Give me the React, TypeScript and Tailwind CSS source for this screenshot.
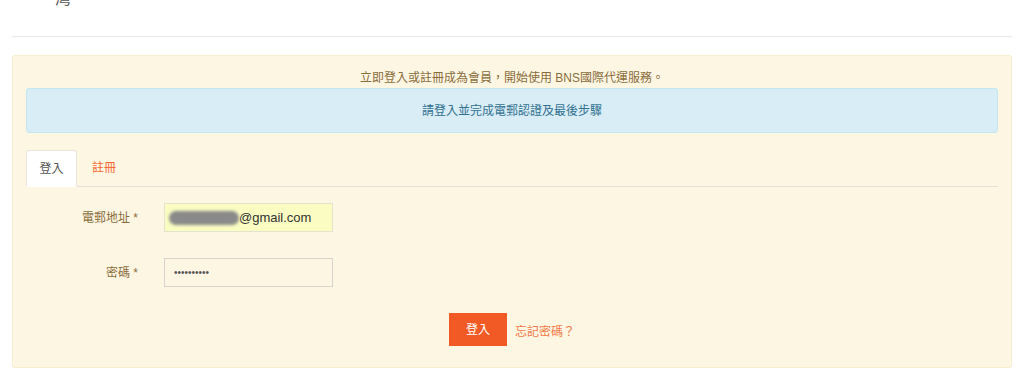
import React from 'react';

const font = "font-['Liberation_Sans','Noto_Sans_CJK_TC',sans-serif]";

const FormRow: React.FC<{ label: string; children: React.ReactNode }> = ({ label, children }) => (
    <div className="flex items-center">
        <label className="w-[114px] text-right text-[12px] text-[#8a6d3b] pr-[2px]">
            {label} <span>*</span>
        </label>
        <div className="ml-[24px]">{children}</div>
    </div>
);

const App: React.FC = () => {
    return (
        <div className={`${font} min-h-[379px] bg-white px-[12px] overflow-hidden`}>
            {/* header, cut off at the top of the window */}
            <div className="h-[37px] border-b border-[#e8e8e8] relative">
                <span className="absolute left-[43px] -top-[13px] text-[16px] text-[#555]">灣</span>
            </div>

            <div className="mt-[18px] bg-[#fdf6e3] border border-[#f8ecd0] rounded-[3px] px-[13px] pt-[13px] pb-[21px]">
                <p className="text-center text-[12px] leading-[19px] text-[#8a6d3b]">
                    立即登入或註冊成為會員，開始使用 BNS國際代運服務。
                </p>

                <div className="h-[45px] flex items-center justify-center bg-[#d9edf7] border border-[#c5e6f0] rounded-[3px] text-[12px] text-[#31708f]">
                    請登入並完成電郵認證及最後步驟
                </div>

                {/* tabs */}
                <div className="mt-[17px] flex border-b border-[#e3e1d8]">
                    <div className="-mb-px h-[37px] w-[51px] flex items-center justify-center bg-white border border-[#e8e6dc] border-b-white rounded-t-[3px] text-[12px] text-[#555]">
                        登入
                    </div>
                    <div className="h-[36px] flex items-center pl-[15px] text-[12px] text-[#f26a36]">註冊</div>
                </div>

                {/* form */}
                <div className="mt-[16px] flex flex-col gap-[26px]">
                    <FormRow label="電郵地址">
                        <div className="w-[169px] h-[29px] bg-[#fafcc2] border border-[#e3e3d0] flex items-center pl-[4px] text-[13px] text-[#333]">
                            <span className="inline-block w-[70px] h-[14px] bg-[#8a8a8a] rounded-full blur-[1.5px]" />
                            <span>@gmail.com</span>
                        </div>
                    </FormRow>
                    <FormRow label="密碼">
                        <div className="w-[169px] h-[29px] border border-[#d6d4cc] flex items-center pl-[9px] text-[10px] text-[#555]">
                            ••••••••••
                        </div>
                    </FormRow>
                </div>

                <div className="mt-[26px] flex items-center justify-center gap-[8px]">
                    <button className="w-[58px] h-[33px] bg-[#f15a24] text-white text-[12px]">登入</button>
                    <a className="text-[12px] text-[#f27a48] mt-[4px]">忘記密碼？</a>
                </div>
            </div>
        </div>
    );
};

export default App;
